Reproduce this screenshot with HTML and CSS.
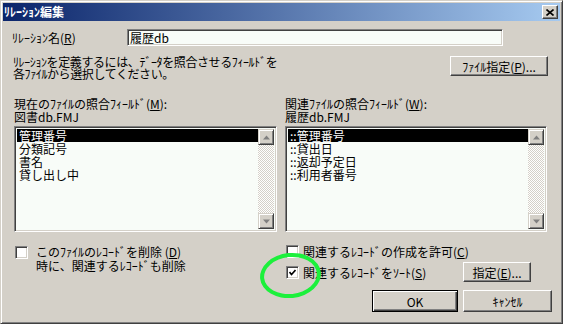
FILE: index.html
```html
<!DOCTYPE html>
<html lang="ja">
  <head>
    <meta charset="UTF-8" />
    <title>リレーション編集</title>
    <link rel="stylesheet" href="styles.css">
  </head>
  <body>
    <div class="window">
      <div class="titlebar">
        <span class="title">ﾘﾚｰｼｮﾝ編集</span>
        <div class="close-btn">
          <svg width="8" height="7" viewBox="0 0 8 7"><path d="M0.5 0.5 L7.5 6.5 M7.5 0.5 L0.5 6.5" stroke="#000" stroke-width="1.6" fill="none"/></svg>
        </div>
      </div>

      <div class="name-row">
        <label class="name-label">ﾘﾚｰｼｮﾝ名(<u>R</u>)</label>
        <div class="field name-input">履歴db</div>
      </div>

      <div class="desc-row">
        <p class="desc">ﾘﾚｰｼｮﾝを定義するには、ﾃﾞｰﾀを照合させるﾌｨｰﾙﾄﾞを<br>各ﾌｧｲﾙから選択してください。</p>
        <div class="btn file-btn">ﾌｧｲﾙ指定(<u>P</u>)...</div>
      </div>

      <div class="columns">
        <div class="col">
          <div class="col-label">現在のﾌｧｲﾙの照合ﾌｨｰﾙﾄﾞ(<u>M</u>):<br>図書db.FMJ</div>
          <div class="listbox">
            <ul class="items">
              <li class="selected">管理番号</li>
              <li>分類記号</li>
              <li>書名</li>
              <li>貸し出し中</li>
            </ul>
            <div class="scrollbar">
              <div class="arrow-btn"><svg width="7" height="5" viewBox="0 0 7 5"><path d="M3.5 0.5 L7 4.5 L0 4.5 Z" fill="#808080"/></svg></div>
              <div class="track"></div>
              <div class="arrow-btn"><svg width="7" height="5" viewBox="0 0 7 5"><path d="M0 0.5 L7 0.5 L3.5 4.5 Z" fill="#808080"/></svg></div>
            </div>
          </div>
        </div>

        <div class="col col-right">
          <div class="col-label">関連ﾌｧｲﾙの照合ﾌｨｰﾙﾄﾞ(<u>W</u>):<br>履歴db.FMJ</div>
          <div class="listbox">
            <ul class="items">
              <li class="selected">::管理番号</li>
              <li>::貸出日</li>
              <li>::返却予定日</li>
              <li>::利用者番号</li>
            </ul>
            <div class="scrollbar">
              <div class="arrow-btn"><svg width="7" height="5" viewBox="0 0 7 5"><path d="M3.5 0.5 L7 4.5 L0 4.5 Z" fill="#808080"/></svg></div>
              <div class="track"></div>
              <div class="arrow-btn"><svg width="7" height="5" viewBox="0 0 7 5"><path d="M0 0.5 L7 0.5 L3.5 4.5 Z" fill="#808080"/></svg></div>
            </div>
          </div>
        </div>
      </div>

      <div class="options">
        <div class="option-left">
          <div class="checkbox"></div>
          <div class="option-text">このﾌｧｲﾙのﾚｺｰﾄﾞを削除 (<u>D</u>)<br>時に、関連するﾚｺｰﾄﾞも削除</div>
        </div>

        <div class="option-right">
          <div class="check-row wide">
            <div class="checkbox"></div>
            <span class="check-text">関連するﾚｺｰﾄﾞの作成を許可(<u>C</u>)</span>
          </div>
          <div class="check-row sort-row">
            <div class="checkbox">
              <svg width="7" height="7" viewBox="0 0 7 7"><path d="M0.5 3 L2.5 5.5 L6.5 1" stroke="#000" stroke-width="1.6" fill="none"/></svg>
            </div>
            <span class="check-text">関連するﾚｺｰﾄﾞをｿｰﾄ(<u>S</u>)</span>
          </div>
          <div class="btn sort-btn">指定(<u>E</u>)...</div>
          <div class="btn ok-btn">OK</div>
          <div class="btn cancel-btn">ｷｬﾝｾﾙ</div>
        </div>
      </div>

      <div class="highlight"></div>
    </div>
  </body>
</html>
```

FILE: styles.css
```css
body {
  margin: 0;
  background: #d4d0c8;
  font-family: "Noto Sans CJK JP", "Liberation Sans", sans-serif;
  font-size: 12px;
  color: #000;
}

u {
  text-underline-offset: 1px;
}

.window {
  position: relative;
  width: 563px;
  height: 324px;
  box-sizing: border-box;
  padding: 2px;
  background: #d4d0c8;
  border: 1px solid;
  border-color: #d4d0c8 #404040 #404040 #d4d0c8;
  box-shadow: inset 1px 1px #fff, inset -1px -1px #808080;
}

/* Title bar */
.titlebar {
  height: 18px;
  display: flex;
  align-items: center;
  justify-content: space-between;
  padding: 0 2px 0 1px;
  background: linear-gradient(to right, #0a246a, #a6caf0);
}

.title {
  color: #fff;
  font-weight: bold;
  line-height: 18px;
}

.close-btn {
  width: 16px;
  height: 14px;
  box-sizing: border-box;
  display: flex;
  align-items: center;
  justify-content: center;
  background: #d4d0c8;
  border: 1px solid;
  border-color: #fff #404040 #404040 #fff;
  box-shadow: inset -1px -1px #808080;
}

/* Shared 3D pieces */
.field,
.listbox,
.checkbox {
  box-sizing: border-box;
  border: 1px solid;
  border-color: #808080 #fff #fff #808080;
  box-shadow: inset 1px 1px #404040, inset -1px -1px #d4d0c8;
  background: #f8fcf8;
}

.btn {
  box-sizing: border-box;
  display: flex;
  align-items: center;
  justify-content: center;
  height: 20px;
  background: #d4d0c8;
  border: 1px solid;
  border-color: #fff #404040 #404040 #fff;
  box-shadow: inset -1px -1px #808080;
  white-space: nowrap;
}

/* Name row */
.name-row {
  display: flex;
  align-items: center;
  margin-top: 8px;
  padding-left: 9px;
}

.name-label {
  width: 115px;
}

.name-input {
  width: 376px;
  height: 17px;
  line-height: 15px;
  padding-left: 2px;
}

/* Description row */
.desc-row {
  display: flex;
  justify-content: space-between;
  align-items: flex-start;
  margin-top: 10px;
  padding: 0 12px 0 10px;
}

.desc {
  margin: 0;
  line-height: 12px;
  white-space: nowrap;
  letter-spacing: -0.4px;
}

.file-btn {
  width: 98px;
}

/* Field lists */
.columns {
  display: flex;
  gap: 8px;
  margin-top: 17px;
  padding-left: 11px;
}

.col {
  width: 263px;
}

.col-right {
  width: 262px;
}

.col-label {
  line-height: 13px;
  white-space: nowrap;
}

.listbox {
  display: flex;
  height: 106px;
  margin-top: 3px;
  padding: 2px;
}

.items {
  flex: 1;
  margin: 0;
  padding: 0;
  list-style: none;
}

.items li {
  height: 13px;
  line-height: 13px;
  padding-left: 2px;
  white-space: nowrap;
}

.items .selected {
  background: #000;
  color: #fff;
}

.scrollbar {
  width: 16px;
  display: flex;
  flex-direction: column;
}

.arrow-btn {
  height: 16px;
  box-sizing: border-box;
  display: flex;
  align-items: center;
  justify-content: center;
  background: #d4d0c8;
  border: 1px solid;
  border-color: #d4d0c8 #404040 #404040 #d4d0c8;
  box-shadow: inset 1px 1px #fff, inset -1px -1px #808080;
}

.track {
  flex: 1;
  background: repeating-conic-gradient(#d4d0c8 0 25%, #fff 0 50%) 0 0 / 2px 2px;
}

/* Options */
.options {
  display: flex;
  gap: 8px;
  padding-left: 11px;
}

.option-left {
  width: 263px;
  display: flex;
  align-items: flex-start;
  margin-top: 13px;
}

.checkbox {
  width: 13px;
  height: 13px;
  flex-shrink: 0;
  display: flex;
  align-items: center;
  justify-content: center;
  background: #fff;
}

.option-left .checkbox {
  margin: 1px 0 0 1px;
}

.option-text {
  margin-left: 8px;
  line-height: 14px;
  white-space: nowrap;
}

.option-right {
  flex: 1;
  display: grid;
  grid-template-columns: 1fr 89px;
  column-gap: 5px;
  margin-top: 13px;
  padding-right: 8px;
}

.check-row {
  display: flex;
  align-items: center;
  padding-left: 1px;
  white-space: nowrap;
}

.check-row.wide {
  grid-column: 1 / 3;
  height: 13px;
}

.check-text {
  margin-left: 4px;
}

.sort-row,
.sort-btn {
  margin-top: 4px;
  height: 20px;
}

.sort-btn {
  width: 68px;
}

.ok-btn,
.cancel-btn {
  margin-top: 8px;
  height: 22px;
}

.ok-btn {
  justify-self: end;
  width: 86px;
  border: 1px solid #000;
  box-shadow: inset 1px 1px #fff, inset -1px -1px #404040, inset -2px -2px #808080;
}

.cancel-btn {
  width: 89px;
}

/* Green marker drawn over the screenshot */
.highlight {
  position: absolute;
  left: 259px;
  top: 252px;
  width: 61px;
  height: 45px;
  box-sizing: border-box;
  border: 4px solid #1cf03c;
  border-radius: 50%;
  transform: rotate(-6deg);
}
```
